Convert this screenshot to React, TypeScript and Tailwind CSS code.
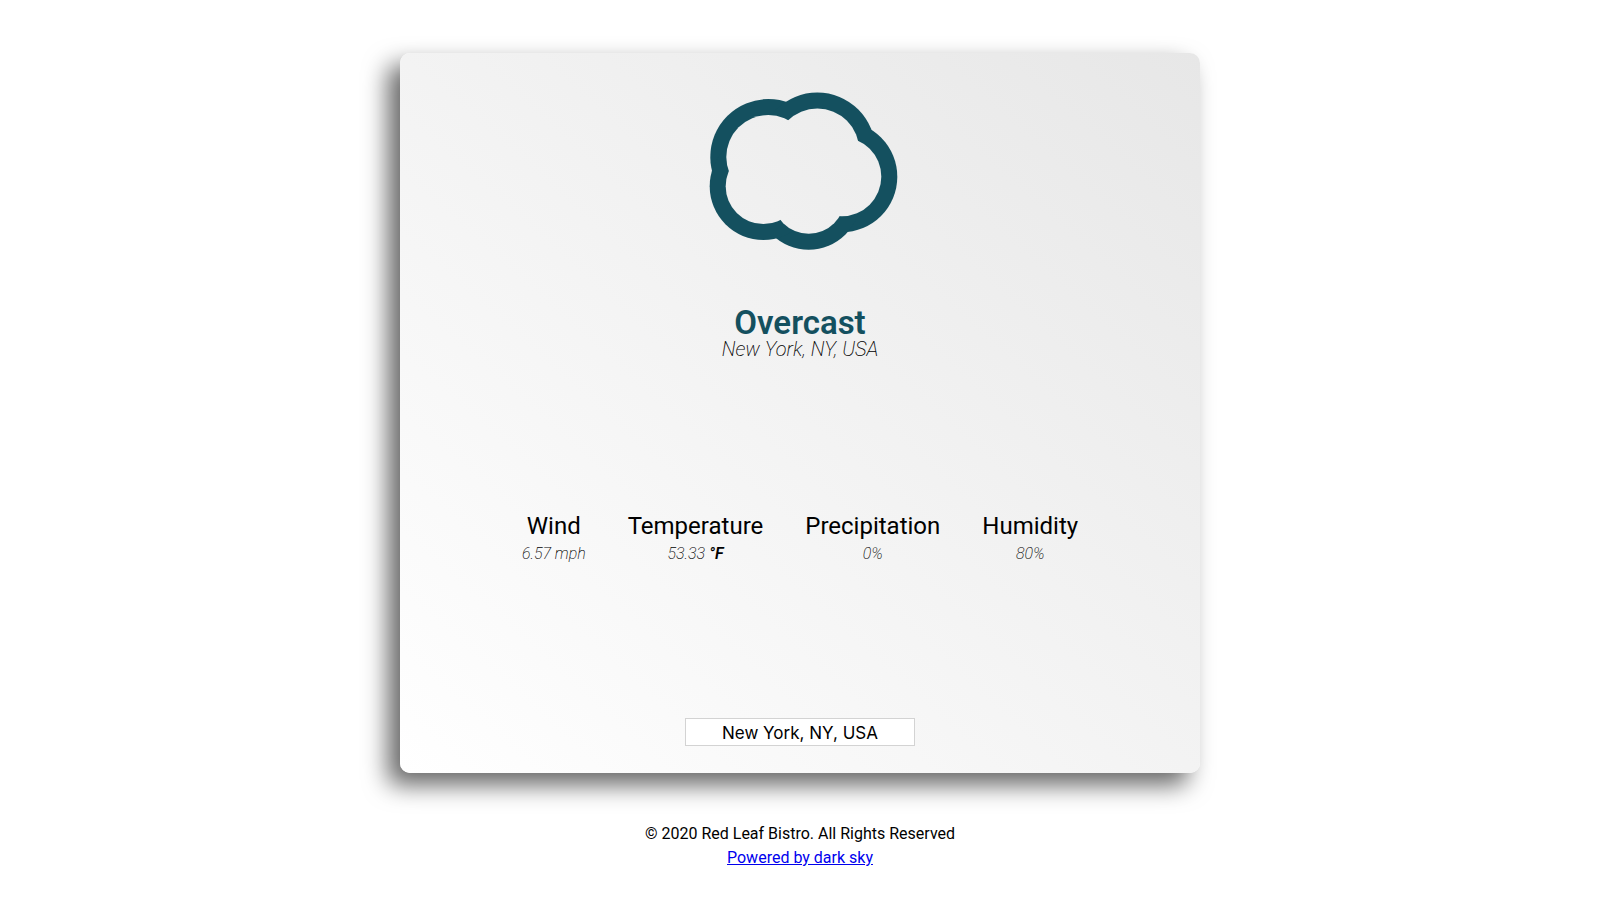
import { useState } from "react";

type Stat = { label: string; value: string; unit?: string };

const stats: Stat[] = [
  { label: "Wind", value: "6.57 mph" },
  { label: "Temperature", value: "53.33 ", unit: "°F" },
  { label: "Precipitation", value: "0%" },
  { label: "Humidity", value: "80%" },
];

const puffs = [
  { x: 68.3, y: 84, r: 58 },
  { x: 117.3, y: 77.5, r: 58 },
  { x: 141.8, y: 103.7, r: 55.5 },
  { x: 108.7, y: 124.7, r: 52 },
  { x: 63.4, y: 113.3, r: 53.7 },
];

function CloudIcon() {
  return (
    <svg viewBox="0 0 200 200" className="size-50" role="img" aria-label="Overcast">
      <mask id="cloud-hollow" maskUnits="userSpaceOnUse" x="0" y="0" width="200" height="200">
        <rect width="200" height="200" fill="white" />
        {puffs.map((p) => (
          <circle key={p.x} cx={p.x} cy={p.y} r={p.r - 16} fill="black" />
        ))}
      </mask>
      <g mask="url(#cloud-hollow)" fill="#14505f">
        {puffs.map((p) => (
          <circle key={p.x} cx={p.x} cy={p.y} r={p.r} />
        ))}
      </g>
    </svg>
  );
}

export default function App() {
  const [place, setPlace] = useState("New York, NY, USA");

  return (
    <div className="flex min-h-screen flex-col items-center bg-white pt-[53px] font-['Roboto',sans-serif] text-black">
      <main className="flex min-h-[80vh] w-1/2 flex-col items-center rounded-[10px] bg-linear-to-tr from-white to-[#e7e7e7] pt-5 pb-[27px] shadow-[-12px_12px_24px_rgba(0,0,0,0.6)]">
        <CloudIcon />
        <h1 className="mt-[33px] text-[33px] leading-[34px] font-semibold text-[#14505f]">Overcast</h1>
        <p className="text-xl leading-[18px] font-extralight italic">New York, NY, USA</p>
        <dl className="mt-[154px] flex gap-[42px] text-center">
          {stats.map((s) => (
            <div key={s.label}>
              <dt className="text-2xl leading-7">{s.label}</dt>
              <dd className="text-base leading-7 font-extralight italic">
                {s.value}
                {s.unit && <span className="font-semibold">{s.unit}</span>}
              </dd>
            </div>
          ))}
        </dl>
        <input
          type="text"
          aria-label="Location"
          value={place}
          onChange={(e) => setPlace(e.target.value)}
          className="mt-auto h-7 w-[230px] border border-[#d3d3d3] bg-white pt-0.5 text-center font-['Inter',sans-serif] text-[17px]"
        />
      </main>
      <footer className="mt-[49px] text-center text-base leading-6">
        <p>© 2020 Red Leaf Bistro. All Rights Reserved</p>
        <a href="https://darksky.net/poweredby/" className="text-[#0000ee] underline">
          Powered by dark sky
        </a>
      </footer>
    </div>
  );
}
